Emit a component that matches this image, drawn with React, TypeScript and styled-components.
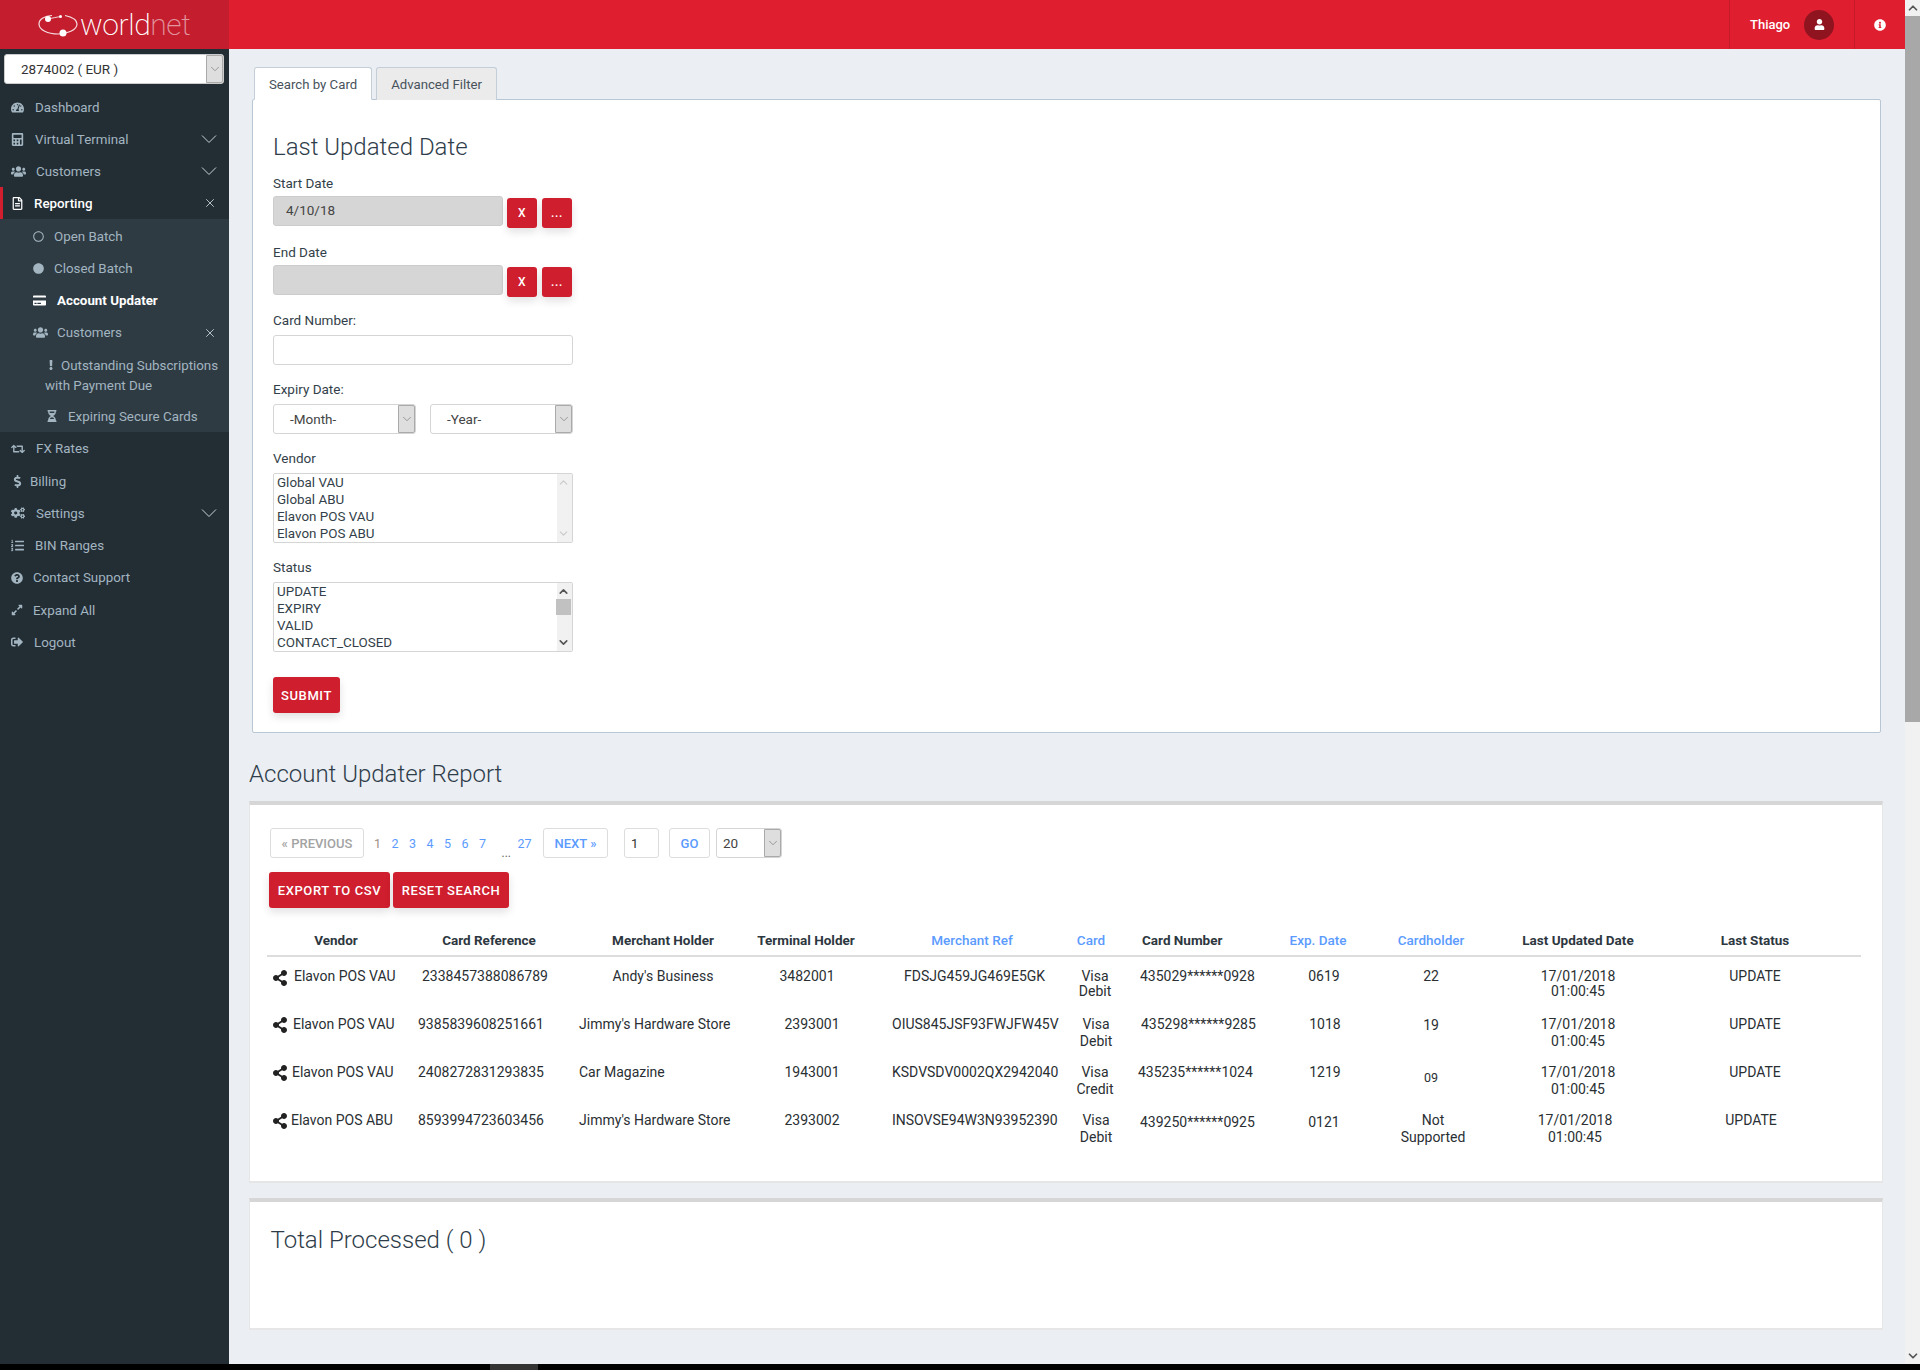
import React from 'react';
import styled, { createGlobalStyle } from 'styled-components';
import {
  FaTachometerAlt, FaCalculator, FaUsers, FaRegFileAlt, FaRegCircle, FaCircle, FaCreditCard,
  FaExclamation, FaHourglassHalf, FaRetweet, FaDollarSign, FaCogs, FaListOl, FaQuestionCircle,
  FaExpandAlt, FaSignOutAlt, FaUser, FaInfoCircle, FaShareAlt,
} from 'react-icons/fa';
import { ChevronDown, ChevronUp, X } from 'lucide-react';

const GlobalStyle = createGlobalStyle`
  html, body { margin: 0; padding: 0; background: #000; overflow: hidden; }
  * { box-sizing: border-box; }
  body { font-family: Roboto, "Liberation Sans", sans-serif; font-size: 14px; color: #333; }
`;

const Page = styled.div`
  width: 1920px;
  height: 1370px;
  display: flex;
  flex-direction: column;
  overflow: hidden;
`;
const Window = styled.div`
  flex: 1;
  min-height: 0;
  display: flex;
`;
const Shell = styled.div`
  flex: 1;
  min-width: 0;
  display: flex;
  flex-direction: column;
  background: #ebeef3;
`;

/* top bar */
const TopBar = styled.header`
  height: 49px;
  flex: none;
  display: flex;
  background: #df1e30;
  color: #fff;
`;
const Brand = styled.div`
  width: 229px;
  background: #c31d2e;
  display: flex;
  align-items: center;
  padding-left: 38px;
`;
const BrandName = styled.span`
  font-size: 30px;
  font-weight: 200;
  letter-spacing: -0.4px;
  line-height: 49px;
  margin-left: 1px;
  color: #fff;
`;
const BrandNet = styled.span`
  color: rgba(255, 255, 255, 0.55);
`;
const TopRight = styled.div`
  margin-left: auto;
  display: flex;
`;
const UserBox = styled.div`
  width: 126px;
  display: flex;
  align-items: center;
  padding-left: 20px;
  gap: 14px;
  font-size: 13px;
  font-weight: 500;
  border-left: 1px solid #c51b2b;
  border-right: 1px solid #c51b2b;
`;
const Avatar = styled.span`
  width: 30px;
  height: 30px;
  border-radius: 50%;
  background: #8f1420;
  display: flex;
  align-items: center;
  justify-content: center;
  font-size: 11px;
`;
const InfoBox = styled.div`
  width: 50px;
  display: flex;
  align-items: center;
  justify-content: center;
  font-size: 12px;
`;

const Body = styled.div`
  flex: 1;
  min-height: 0;
  display: flex;
`;

/* sidebar */
const Sidebar = styled.aside`
  width: 229px;
  flex: none;
  background: #222d34;
  padding-top: 5px;
`;
const SideSelect = styled.div`
  height: 30px;
  margin: 0 5px 7px 4px;
  background: #fff;
  border: 1px solid #ccc;
  border-radius: 3px;
  display: flex;
  align-items: center;
  justify-content: space-between;
  padding-left: 16px;
  color: #333;
  font-size: 13.5px;
`;
const ArrowBox = styled.span<{ $w?: number }>`
  width: ${(p) => p.$w ?? 17}px;
  align-self: stretch;
  background: #dedede;
  border: 1px solid #aaa;
  border-radius: 0 2px 2px 0;
  display: flex;
  align-items: center;
  justify-content: center;
  color: #666;
`;
const NavRow = styled.div<{ $h?: number; $active?: boolean; $left?: number }>`
  height: ${(p) => p.$h ?? 32}px;
  display: flex;
  align-items: center;
  padding-left: ${(p) => p.$left ?? 11}px;
  padding-right: 12px;
  color: ${(p) => (p.$active ? '#fff' : '#a3b5c0')};
  font-weight: ${(p) => (p.$active ? 500 : 400)};
  font-size: 13.35px;
`;
const ActiveRow = styled(NavRow)`
  border-left: 3px solid #d11f2f;
`;
const NavIcon = styled.span<{ $w: number; $size?: number }>`
  width: ${(p) => p.$w}px;
  flex: none;
  display: flex;
  align-items: center;
  font-size: ${(p) => p.$size ?? 14}px;
`;
const NavEnd = styled.span`
  margin-left: auto;
  display: flex;
  align-items: center;
  color: #c9d3da;
`;
const SubMenu = styled.div`
  background: #2e3b43;
  padding-top: 1px;
`;
const SubBold = styled.span`
  font-weight: 700;
  color: #fff;
`;
const WrapRow = styled.div`
  height: 51px;
  padding: 6.5px 8px 0 45px;
  line-height: 19px;
  font-size: 13.35px;
  color: #a3b5c0;
`;
const InlineIcon = styled.span`
  display: inline-block;
  width: 16px;
  padding-left: 1px;
  font-size: 10px;
`;

/* main column */
const Main = styled.main`
  flex: 1;
  min-width: 0;
  padding: 18px 22px 0 20px;
`;
const Tabs = styled.div`
  display: flex;
  gap: 4px;
  margin-left: 5px;
  height: 32px;
`;
const Tab = styled.div<{ $active?: boolean }>`
  padding: ${(p) => (p.$active ? 2 : 0)}px 14px 0;
  display: flex;
  align-items: center;
  font-size: 13.2px;
  color: #47525c;
  background: ${(p) => (p.$active ? '#fff' : '#ebebeb')};
  border: 1px solid #c3ced8;
  border-bottom: ${(p) => (p.$active ? '1px solid #fff' : '0')};
  border-radius: 3px 3px 0 0;
  margin-bottom: -1px;
  position: relative;
`;
const Panel = styled.section`
  margin: 0 2px 0 3px;
  height: 634px;
  background: #fff;
  border: 1px solid #b8c7d3;
  border-radius: 2px;
  padding: 32px 20px 0;
`;
const Heading = styled.h2`
  margin: 0;
  font-size: 24px;
  line-height: 30px;
  font-weight: 300;
  color: #2f3d4a;
`;
const PageHeading = styled(Heading)`
  margin: 26px 0 12px 0;
`;
const FormField = styled.div<{ $top: number }>`
  margin-top: ${(p) => p.$top}px;
`;
const Label = styled.label<{ $gap: number }>`
  display: block;
  height: 16px;
  line-height: 16px;
  margin-bottom: ${(p) => p.$gap}px;
  font-size: 13.5px;
  color: #333f4a;
`;
const DateRow = styled.div`
  display: flex;
  align-items: flex-start;
  height: 32px;
`;
const DateInput = styled.input`
  width: 230px;
  height: 30px;
  margin-right: 4px;
  background: #d6d6d6;
  border: 1px solid #ccc;
  border-radius: 3px;
  padding: 0 12px 2px;
  font: 13.5px Roboto, sans-serif;
  color: #444;
`;
const RedButton = styled.button<{ $w?: number; $h?: number }>`
  width: ${(p) => (p.$w ? `${p.$w}px` : 'auto')};
  height: ${(p) => p.$h ?? 36}px;
  padding: 0;
  background: #cf1e2e;
  color: #fff;
  border: 0;
  border-radius: 3px;
  font: 500 13px Roboto, sans-serif;
  letter-spacing: 0.6px;
  box-shadow: 0 4px 9px rgba(0, 0, 0, 0.12);
`;
const SquareButton = styled(RedButton)`
  margin-top: 2px;
  margin-right: 5px;
  font-size: 12px;
`;
const TextInput = styled.input`
  display: block;
  width: 300px;
  height: 30px;
  background: #fff;
  border: 1px solid #d5d5d5;
  border-radius: 3px;
`;
const SelectRow = styled.div`
  display: flex;
  gap: 14px;
`;
const SelectBox = styled.div<{ $w: number; $pad: number; $left?: number }>`
  width: ${(p) => p.$w}px;
  height: 30px;
  margin-left: ${(p) => p.$left ?? 0}px;
  display: flex;
  align-items: center;
  justify-content: space-between;
  padding-left: ${(p) => p.$pad}px;
  background: #fff;
  border: 1px solid #d5d5d5;
  border-radius: 3px;
  font-size: 13.5px;
  color: #444;
`;
const ListBox = styled.div`
  width: 300px;
  height: 70px;
  display: flex;
  justify-content: space-between;
  border: 1px solid #d5d5d5;
  border-radius: 2px;
  overflow: hidden;
  font-size: 13.4px;
  line-height: 17px;
  color: #333f4a;
`;
const ListItems = styled.div`
  padding: 0 0 0 3px;
`;
const ListBar = styled.div<{ $on?: boolean }>`
  width: 17px;
  background: #f1f1f1;
  border-left: 2px solid #fff;
  padding-right: 2px;
  display: flex;
  flex-direction: column;
  align-items: center;
  justify-content: space-between;
  color: ${(p) => (p.$on ? '#555' : '#c8c8c8')};
`;
const ListArrow = styled.span`
  height: 17px;
  display: flex;
  align-items: center;
`;
const ListThumb = styled.span`
  width: 15px;
  height: 16px;
  margin-top: -1px;
  margin-bottom: auto;
  background: #c1c1c1;
`;
const SubmitWrap = styled.div`
  margin-top: 25px;
`;

/* report cards */
const Card = styled.section<{ $h: number }>`
  height: ${(p) => p.$h}px;
  background: #fff;
  border: 1px solid #e6e6e6;
  border-top: 4px solid #d6d6d6;
  border-bottom: 2px solid #e6e6e6;
`;
const ReportCard = styled(Card)`
  padding: 23px 21px 0 17px;
`;
const TotalCard = styled(Card)`
  margin-top: 15px;
  padding: 23px 20px 0 20.5px;
`;
const Pager = styled.div`
  display: flex;
  align-items: stretch;
  height: 30px;
  padding-left: 3px;
`;
const PageButton = styled.div<{ $w: number; $off?: boolean; $left?: number }>`
  width: ${(p) => p.$w}px;
  margin-left: ${(p) => p.$left ?? 0}px;
  display: flex;
  align-items: center;
  justify-content: center;
  border: 1px solid #ddd;
  border-radius: 3px;
  font-size: 13px;
  font-weight: 500;
  color: ${(p) => (p.$off ? '#a3a3a3' : '#5b9bff')};
`;
const PageNumbers = styled.div`
  width: 179px;
  display: flex;
  align-items: center;
  padding-left: 10px;
  font-size: 12.5px;
`;
const PageNumber = styled.span<{ $w?: number; $off?: boolean }>`
  width: ${(p) => p.$w ?? 17.5}px;
  color: ${(p) => (p.$off ? '#a08f80' : '#5b9bff')};
`;
const PageDots = styled.span`
  width: 21px;
  align-self: flex-end;
  padding-left: 5px;
  font-size: 12px;
  line-height: 10px;
  color: #666;
`;
const PageJump = styled.div`
  width: 35px;
  margin-left: 16px;
  display: flex;
  align-items: center;
  padding-left: 6px;
  border: 1px solid #ddd;
  border-radius: 3px;
  font-size: 13px;
`;
const ActionRow = styled.div`
  display: flex;
  gap: 3px;
  margin: 14px 0 0 2px;
`;
const GRID = '138px 168px 180px 126px 186px 52px 153px 96px 130px 164px 190px';
const TableHead = styled.div`
  display: grid;
  grid-template-columns: ${GRID};
  margin-top: 17px;
  height: 32px;
  border-bottom: 2px solid #ddd;
  align-items: center;
`;
const HeadCell = styled.div<{ $link?: boolean; $pl?: number; $pr?: number; $left?: boolean }>`
  font-size: 13.5px;
  font-weight: ${(p) => (p.$link ? 500 : 700)};
  color: ${(p) => (p.$link ? '#5b9bff' : '#2d3740')};
  text-align: ${(p) => (p.$left ? 'left' : 'center')};
  padding-left: ${(p) => p.$pl ?? 0}px;
  padding-right: ${(p) => p.$pr ?? 0}px;
`;
const TableRow = styled.div<{ $lh: number; $pt: number }>`
  display: grid;
  grid-template-columns: ${GRID};
  height: 48px;
  padding-top: ${(p) => p.$pt}px;
  line-height: ${(p) => p.$lh}px;
  font-size: 14px;
  color: #2a2f33;
`;
const BodyCell = styled.div<{ $pl?: number; $pr?: number; $left?: boolean; $top?: number; $small?: boolean }>`
  white-space: pre-line;
  text-align: ${(p) => (p.$left ? 'left' : 'center')};
  padding-left: ${(p) => p.$pl ?? 0}px;
  padding-right: ${(p) => p.$pr ?? 0}px;
  padding-top: ${(p) => p.$top ?? 0}px;
  font-size: ${(p) => (p.$small ? 12.5 : 14)}px;
`;
const VendorCell = styled.div`
  display: flex;
  align-items: flex-start;
  padding-left: 5px;
`;
const ShareIcon = styled.span<{ $gap: number }>`
  display: flex;
  margin-top: 1px;
  margin-right: ${(p) => p.$gap}px;
  font-size: 16px;
  color: #222;
`;

/* browser scrollbars */
const ScrollTrack = styled.div`
  width: 15px;
  flex: none;
  background: #f1f1f1;
  display: flex;
  flex-direction: column;
  color: #555;
`;
const ScrollArrow = styled.div`
  height: 16px;
  flex: none;
  display: flex;
  align-items: center;
  justify-content: center;
`;
const ScrollThumb = styled.div`
  height: 706px;
  flex: none;
  background: #a8a8a8;
  margin-bottom: auto;
`;
const BottomStrip = styled.div`
  height: 6px;
  flex: none;
  background: #000;
  padding-left: 490px;
`;
const BottomThumb = styled.div`
  width: 48px;
  height: 6px;
  background: #333;
`;

type NavItem = { icon: React.ReactNode; label: string; w: number; size?: number; h?: number; end?: boolean };
const topItems: NavItem[] = [
  { icon: <FaTachometerAlt />, label: 'Dashboard', w: 24, size: 13 },
  { icon: <FaCalculator />, label: 'Virtual Terminal', w: 24, size: 13, end: true },
  { icon: <FaUsers />, label: 'Customers', w: 25, size: 15, end: true },
];
const bottomItems: NavItem[] = [
  { icon: <FaRetweet />, label: 'FX Rates', w: 25, h: 33 },
  { icon: <FaDollarSign />, label: 'Billing', w: 19, size: 13 },
  { icon: <FaCogs />, label: 'Settings', w: 25, end: true },
  { icon: <FaListOl />, label: 'BIN Ranges', w: 24, size: 13 },
  { icon: <FaQuestionCircle />, label: 'Contact Support', w: 22, size: 12, h: 33 },
  { icon: <FaExpandAlt />, label: 'Expand All', w: 22, size: 12 },
  { icon: <FaSignOutAlt />, label: 'Logout', w: 23, size: 12 },
];

const Chevron = () => (
  <svg width="16" height="10" viewBox="0 0 16 10" fill="none">
    <path d="M1 1.500l7 7 7-7" stroke="currentColor" strokeWidth="1" />
  </svg>
);

const renderNav = (item: NavItem) => (
  <NavRow key={item.label} $h={item.h}>
    <NavIcon $w={item.w} $size={item.size}>{item.icon}</NavIcon>
    {item.label}
    {item.end && <NavEnd><Chevron /></NavEnd>}
  </NavRow>
);

const Logo = () => (
  <svg width="41" height="24" viewBox="0 0 41 24" fill="none">
    <path d="M14 2.500C7 3 1 6 1 11c0 6 9 10 19 10 9 0 19-4 19-10 0-4-5-7-12-8.500" stroke="#fff" strokeOpacity="0.85" strokeWidth="1.200" />
    <circle cx="10" cy="6" r="3" fill="#fff" />
    <circle cx="22.500" cy="3.500" r="1.500" fill="#fff" />
    <circle cx="25" cy="20" r="3.500" fill="#fff" />
    <path d="M10 6c5-1 9-2 13-2.500" stroke="#fff" strokeWidth="0.800" />
  </svg>
);

type Row = {
  lh: number;
  pt: number;
  vendor: string;
  gap: number;
  cells: { t: string; pl?: number; pr?: number; left?: boolean; top?: number; small?: boolean }[];
};

const DATE = '17/01/2018\n01:00:45';
const rows: Row[] = [
  {
    lh: 15, pt: 12, vendor: 'Elavon POS VAU', gap: 6,
    cells: [
      { t: '2338457388086789', left: true, pl: 17 },
      { t: "Andy's Business" },
      { t: '3482001', pr: 18 },
      { t: 'FDSJG459JG469E5GK', left: true, pl: 25 },
      { t: 'Visa\nDebit', pl: 8 },
      { t: '435029******0928', left: true, pl: 23 },
      { t: '0619', pl: 12 },
      { t: '22' },
      { t: DATE },
      { t: 'UPDATE' },
    ],
  },
  {
    lh: 17, pt: 11, vendor: 'Elavon POS VAU', gap: 5,
    cells: [
      { t: '9385839608251661', left: true, pl: 13 },
      { t: "Jimmy's Hardware Store", left: true, pl: 6 },
      { t: '2393001', pr: 8 },
      { t: 'OIUS845JSF93FWJFW45V', left: true, pl: 13 },
      { t: 'Visa\nDebit', pl: 10 },
      { t: '435298******9285', left: true, pl: 24 },
      { t: '1018', pl: 14 },
      { t: '19', top: 1 },
      { t: DATE },
      { t: 'UPDATE' },
    ],
  },
  {
    lh: 17, pt: 11, vendor: 'Elavon POS VAU', gap: 4,
    cells: [
      { t: '2408272831293835', left: true, pl: 13 },
      { t: 'Car Magazine', left: true, pl: 6 },
      { t: '1943001', pr: 8 },
      { t: 'KSDVSDV0002QX2942040', left: true, pl: 13 },
      { t: 'Visa\nCredit', pl: 8 },
      { t: '435235******1024', left: true, pl: 21 },
      { t: '1219', pl: 14 },
      { t: '09', top: 5, small: true },
      { t: DATE },
      { t: 'UPDATE' },
    ],
  },
  {
    lh: 17, pt: 11, vendor: 'Elavon POS ABU', gap: 3,
    cells: [
      { t: '8593994723603456', left: true, pl: 13 },
      { t: "Jimmy's Hardware Store", left: true, pl: 6 },
      { t: '2393002', pr: 8 },
      { t: 'INSOVSE94W3N93952390', left: true, pl: 13 },
      { t: 'Visa\nDebit', pl: 10 },
      { t: '439250******0925', left: true, pl: 23, top: 2 },
      { t: '0121', pl: 12, top: 2 },
      { t: 'Not\nSupported', pl: 4 },
      { t: DATE, pr: 6 },
      { t: 'UPDATE', pr: 8 },
    ],
  },
];

const App: React.FC = () => (
  <Page>
    <GlobalStyle />
    <Window>
      <Shell>
        <TopBar>
          <Brand>
            <Logo />
            <BrandName>world<BrandNet>net</BrandNet></BrandName>
          </Brand>
          <TopRight>
            <UserBox>
              Thiago
              <Avatar><FaUser /></Avatar>
            </UserBox>
            <InfoBox><FaInfoCircle /></InfoBox>
          </TopRight>
        </TopBar>
        <Body>
          <Sidebar>
            <SideSelect>
              2874002 ( EUR )
              <ArrowBox><ChevronDown size={14} strokeWidth={1} /></ArrowBox>
            </SideSelect>
            {topItems.map(renderNav)}
            <ActiveRow $active $left={8}>
              <NavIcon $w={23} $size={13}><FaRegFileAlt /></NavIcon>
              Reporting
              <NavEnd><X size={14} strokeWidth={1.500} /></NavEnd>
            </ActiveRow>
            <SubMenu>
              <NavRow $left={33}><NavIcon $w={21} $size={11}><FaRegCircle /></NavIcon>Open Batch</NavRow>
              <NavRow $left={33}><NavIcon $w={21} $size={11}><FaCircle /></NavIcon>Closed Batch</NavRow>
              <NavRow $left={33}><NavIcon $w={24} $size={13}><FaCreditCard color="#fff" /></NavIcon><SubBold>Account Updater</SubBold></NavRow>
              <NavRow $left={33} $h={33}>
                <NavIcon $w={24} $size={15}><FaUsers /></NavIcon>
                Customers
                <NavEnd><X size={14} strokeWidth={1.500} /></NavEnd>
              </NavRow>
              <WrapRow>
                <InlineIcon><FaExclamation /></InlineIcon>Outstanding Subscriptions with Payment Due
              </WrapRow>
              <NavRow $left={46}><NavIcon $w={22} $size={12}><FaHourglassHalf /></NavIcon>Expiring Secure Cards</NavRow>
            </SubMenu>
            {bottomItems.map(renderNav)}
          </Sidebar>
          <Main>
            <Tabs>
              <Tab $active>Search by Card</Tab>
              <Tab>Advanced Filter</Tab>
            </Tabs>
            <Panel>
              <Heading>Last Updated Date</Heading>
              <FormField $top={13}>
                <Label $gap={5}>Start Date</Label>
                <DateRow>
                  <DateInput readOnly defaultValue="4/10/18" />
                  <SquareButton $w={30} $h={30}>X</SquareButton>
                  <SquareButton $w={30} $h={30}>...</SquareButton>
                </DateRow>
              </FormField>
              <FormField $top={16}>
                <Label $gap={5}>End Date</Label>
                <DateRow>
                  <DateInput readOnly />
                  <SquareButton $w={30} $h={30}>X</SquareButton>
                  <SquareButton $w={30} $h={30}>...</SquareButton>
                </DateRow>
              </FormField>
              <FormField $top={15}>
                <Label $gap={7}>Card Number:</Label>
                <TextInput />
              </FormField>
              <FormField $top={16}>
                <Label $gap={7}>Expiry Date:</Label>
                <SelectRow>
                  <SelectBox $w={143} $pad={16}>-Month-<ArrowBox><ChevronDown size={14} strokeWidth={1} /></ArrowBox></SelectBox>
                  <SelectBox $w={143} $pad={16}>-Year-<ArrowBox><ChevronDown size={14} strokeWidth={1} /></ArrowBox></SelectBox>
                </SelectRow>
              </FormField>
              <FormField $top={16}>
                <Label $gap={7}>Vendor</Label>
                <ListBox>
                  <ListItems>Global VAU<br />Global ABU<br />Elavon POS VAU<br />Elavon POS ABU</ListItems>
                  <ListBar>
                    <ListArrow><ChevronUp size={13} /></ListArrow>
                    <ListArrow><ChevronDown size={13} /></ListArrow>
                  </ListBar>
                </ListBox>
              </FormField>
              <FormField $top={16}>
                <Label $gap={7}>Status</Label>
                <ListBox>
                  <ListItems>UPDATE<br />EXPIRY<br />VALID<br />CONTACT_CLOSED</ListItems>
                  <ListBar $on>
                    <ListArrow><ChevronUp size={13} strokeWidth={3} /></ListArrow>
                    <ListThumb />
                    <ListArrow><ChevronDown size={13} strokeWidth={3} /></ListArrow>
                  </ListBar>
                </ListBox>
              </FormField>
              <SubmitWrap>
                <RedButton $w={67}>SUBMIT</RedButton>
              </SubmitWrap>
            </Panel>

            <PageHeading>Account Updater Report</PageHeading>
            <ReportCard $h={382}>
              <Pager>
                <PageButton $w={94} $off>« PREVIOUS</PageButton>
                <PageNumbers>
                  <PageNumber $off>1</PageNumber>
                  <PageNumber>2</PageNumber>
                  <PageNumber>3</PageNumber>
                  <PageNumber>4</PageNumber>
                  <PageNumber>5</PageNumber>
                  <PageNumber>6</PageNumber>
                  <PageNumber>7</PageNumber>
                  <PageDots>...</PageDots>
                  <PageNumber $w={18}>27</PageNumber>
                </PageNumbers>
                <PageButton $w={65}>NEXT »</PageButton>
                <PageJump>1</PageJump>
                <PageButton $w={41} $left={10}>GO</PageButton>
                <SelectBox $w={66} $pad={6} $left={6}>20<ArrowBox><ChevronDown size={14} strokeWidth={1} /></ArrowBox></SelectBox>
              </Pager>
              <ActionRow>
                <RedButton $w={121}>EXPORT TO CSV</RedButton>
                <RedButton $w={116}>RESET SEARCH</RedButton>
              </ActionRow>
              <TableHead>
                <HeadCell>Vendor</HeadCell>
                <HeadCell>Card Reference</HeadCell>
                <HeadCell>Merchant Holder</HeadCell>
                <HeadCell $pr={20}>Terminal Holder</HeadCell>
                <HeadCell $link>Merchant Ref</HeadCell>
                <HeadCell $link>Card</HeadCell>
                <HeadCell $left $pl={25}>Card Number</HeadCell>
                <HeadCell $link>Exp. Date</HeadCell>
                <HeadCell $link>Cardholder</HeadCell>
                <HeadCell>Last Updated Date</HeadCell>
                <HeadCell>Last Status</HeadCell>
              </TableHead>
              {rows.map((row, i) => (
                <TableRow key={i} $lh={row.lh} $pt={row.pt}>
                  <VendorCell>
                    <ShareIcon $gap={row.gap}><FaShareAlt /></ShareIcon>
                    {row.vendor}
                  </VendorCell>
                  {row.cells.map((c, j) => (
                    <BodyCell key={j} $left={c.left} $pl={c.pl} $pr={c.pr} $top={c.top} $small={c.small}>{c.t}</BodyCell>
                  ))}
                </TableRow>
              ))}
            </ReportCard>
            <TotalCard $h={132}>
              <Heading>Total Processed ( 0 )</Heading>
            </TotalCard>
          </Main>
        </Body>
      </Shell>
      <ScrollTrack>
        <ScrollArrow><ChevronUp size={14} strokeWidth={3} /></ScrollArrow>
        <ScrollThumb />
        <ScrollArrow><ChevronDown size={14} strokeWidth={3} /></ScrollArrow>
      </ScrollTrack>
    </Window>
    <BottomStrip><BottomThumb /></BottomStrip>
  </Page>
);

export default App;
